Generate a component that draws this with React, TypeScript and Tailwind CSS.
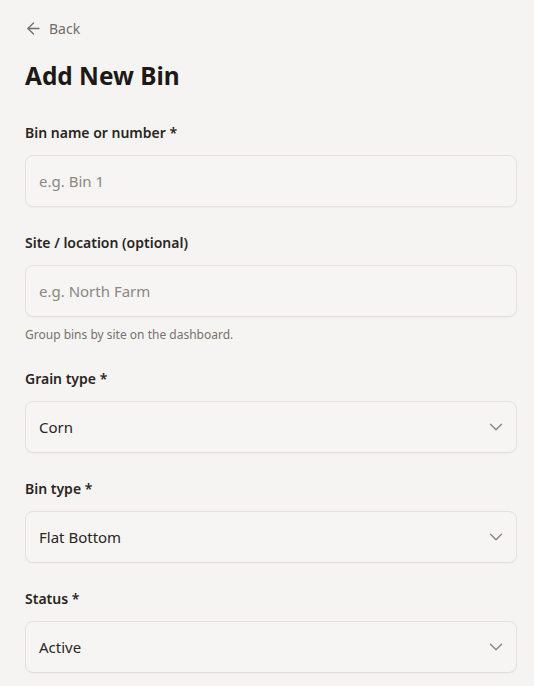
import { ArrowLeft, ChevronDown } from 'lucide-react';

const font = { fontFamily: '"Noto Sans", "Open Sans", sans-serif' };

const inputCls =
  'w-full h-[52px] rounded-lg border border-[#e4e1dd] bg-[#f6f5f3] px-[13px] text-[15px] text-[#2a2624] placeholder:text-[#8c8782] shadow-[0_1px_1px_rgba(0,0,0,0.03)] outline-none';

function Label({ children }: { children: React.ReactNode }) {
  return <label className="block h-5 text-[14px] leading-5 font-semibold text-[#292523]">{children}</label>;
}

function TextField({ label, placeholder, hint }: { label: string; placeholder: string; hint?: string }) {
  return (
    <div className="flex flex-col">
      <Label>{label}</Label>
      <input className={`${inputCls} mt-3`} placeholder={placeholder} />
      {hint && <p className="mt-[10px] text-[12px] leading-4 text-[#77716c]">{hint}</p>}
    </div>
  );
}

function SelectField({ label, value }: { label: string; value: string }) {
  return (
    <div className="flex flex-col">
      <Label>{label}</Label>
      <div className={`${inputCls} mt-3 flex items-center justify-between`}>
        <span>{value}</span>
        <ChevronDown size={22} strokeWidth={1.5} className="text-[#8a8480] -mr-1" />
      </div>
    </div>
  );
}

export default function App() {
  return (
    <div className="min-h-screen bg-[#f5f4f2] pl-[25px] pr-[17px] pt-[18px]" style={font}>
      <button className="flex h-5 items-center gap-[6px] text-[14px] text-[#726d68]">
        <ArrowLeft size={19} strokeWidth={1.6} className="-ml-[1px]" />
        Back
      </button>
      <h1 className="mt-[22px] text-[24.4px] leading-8 font-bold text-[#1c1917]">Add New Bin</h1>
      <div className="mt-[31px] flex flex-col gap-[26px]">
        <TextField label="Bin name or number *" placeholder="e.g. Bin 1" />
        <TextField
          label="Site / location (optional)"
          placeholder="e.g. North Farm"
          hint="Group bins by site on the dashboard."
        />
        <SelectField label="Grain type *" value="Corn" />
        <SelectField label="Bin type *" value="Flat Bottom" />
        <SelectField label="Status *" value="Active" />
      </div>
    </div>
  );
}
